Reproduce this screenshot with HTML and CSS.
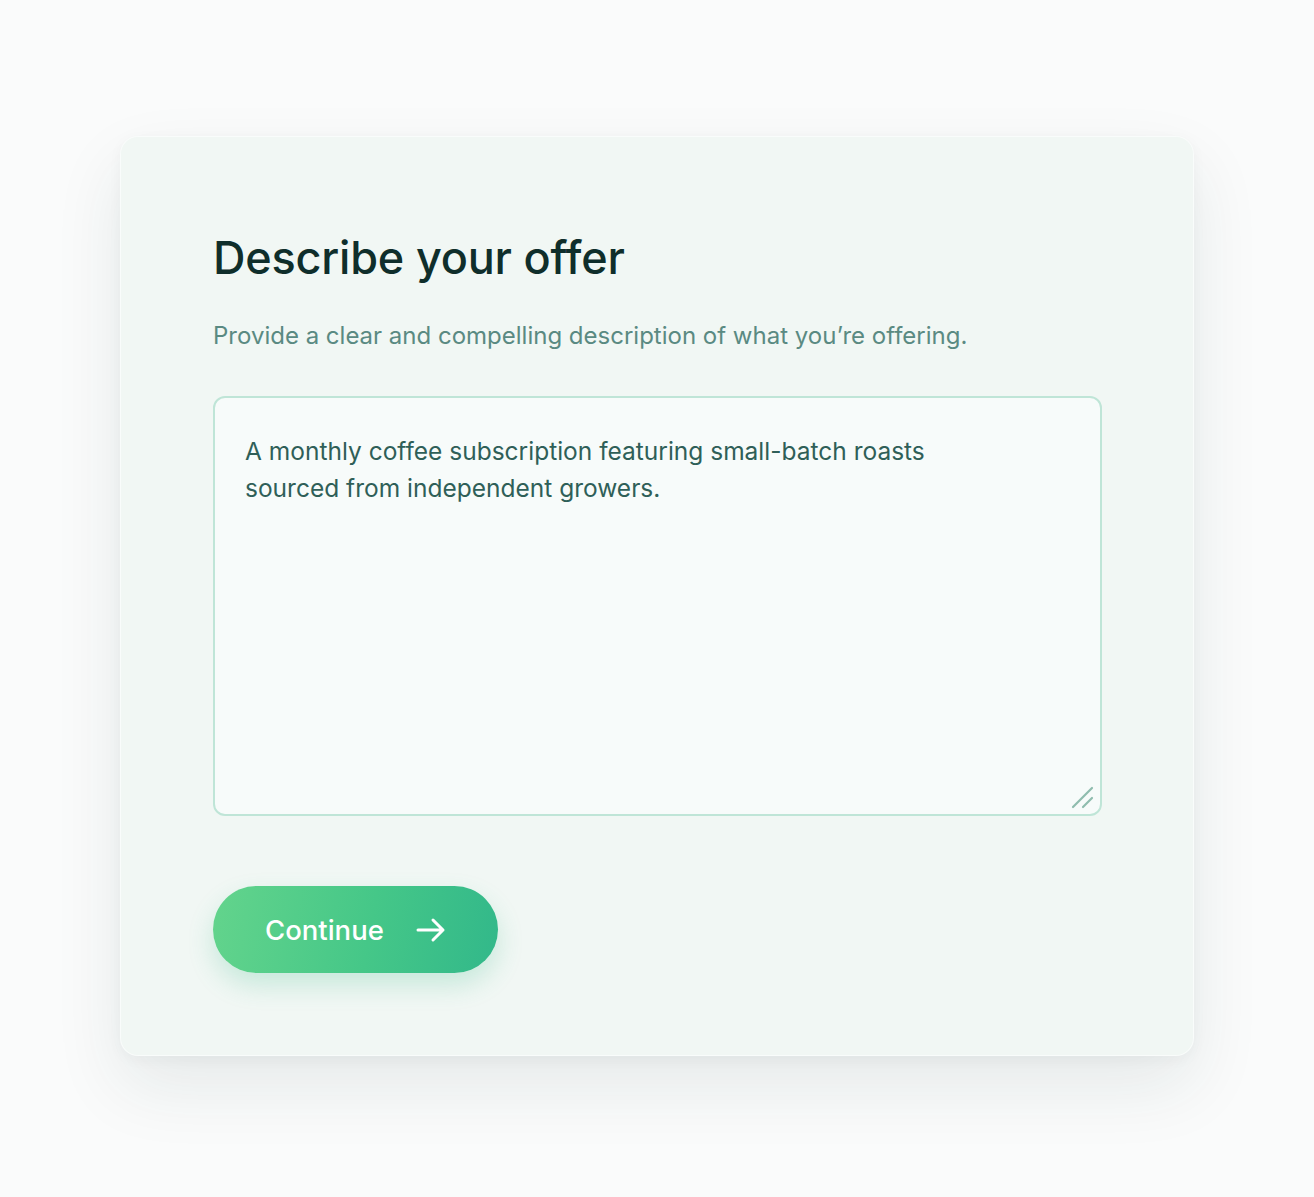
FILE: index.html
```html
<!DOCTYPE html>
<html lang="en">
<head>
<meta charset="utf-8">
<title>Describe your offer</title>
<link rel="stylesheet" href="styles.css">
</head>
<body>
<main class="page">
  <section class="card">
    <h1 class="title">Describe your offer</h1>
    <p class="subtitle">Provide a clear and compelling description of what you’re offering.</p>
    <div class="field">
      <textarea class="input" aria-label="Offer description">A monthly coffee subscription featuring small-batch roasts
sourced from independent growers.</textarea>
      <svg class="grip" width="26" height="26" viewBox="0 0 26 26" aria-hidden="true">
        <path d="M3 23 L22 4 M13 23 L22 14" stroke="#8fbcae" stroke-width="2.2" stroke-linecap="round" fill="none"/>
      </svg>
    </div>
    <button class="btn" type="button">
      <span>Continue</span>
      <svg width="30" height="26" viewBox="0 0 30 26" aria-hidden="true">
        <path d="M2 13 H27 M17 3 L27 13 L17 23" stroke="#ffffff" stroke-width="3" stroke-linecap="round" stroke-linejoin="round" fill="none"/>
      </svg>
    </button>
  </section>
</main>
</body>
</html>
```
FILE: styles.css
```css
* { box-sizing: border-box; }
html, body { margin: 0; padding: 0; }
body {
  background: #fafbfb;
  font-family: "Inter", "Noto Sans", sans-serif;
  min-height: 1197px;
}
.page {
  display: flex;
  justify-content: center;
  padding-top: 136px;
}
.card {
  width: 1074px;
  background: #f1f7f4;
  border-radius: 18px;
  padding: 94px 92px 82px 92px;
  box-shadow: 0 30px 70px rgba(20, 60, 50, 0.09), 0 4px 14px rgba(20, 60, 50, 0.04);
  border: 1px solid rgba(255,255,255,0.6);
}
.title {
  margin: 0;
  font-size: 45px;
  line-height: 54px;
  font-weight: 500;
  letter-spacing: -0.2px;
  color: #0f2e2b;
}
.subtitle {
  margin: 34px 0 0 0;
  font-size: 24px;
  line-height: 34px;
  color: #5a8a82;
  font-weight: 400;
}
.field {
  position: relative;
  margin-top: 43px;
  width: 889px;
}
.input {
  display: block;
  width: 100%;
  height: 420px;
  resize: none;
  border: 2px solid #bfe5d7;
  border-radius: 12px;
  background: #f7fbfa;
  padding: 35px 30px;
  font-family: "Inter", "Noto Sans", sans-serif;
  font-size: 24.5px;
  line-height: 37px;
  color: #2f5f58;
  outline: none;
}
.grip {
  position: absolute;
  right: 6px;
  bottom: 6px;
}
.btn {
  margin-top: 70px;
  display: inline-flex;
  align-items: center;
  gap: 32px;
  height: 87px;
  padding: 0 52px;
  border: none;
  border-radius: 44px;
  background: linear-gradient(100deg, #63d48c 0%, #45c788 55%, #32b88a 100%);
  box-shadow: 0 12px 26px rgba(50, 180, 130, 0.22);
  color: #ffffff;
  font-family: "Inter", "Noto Sans", sans-serif;
  font-size: 27.5px;
  font-weight: 500;
  cursor: pointer;
}
```
